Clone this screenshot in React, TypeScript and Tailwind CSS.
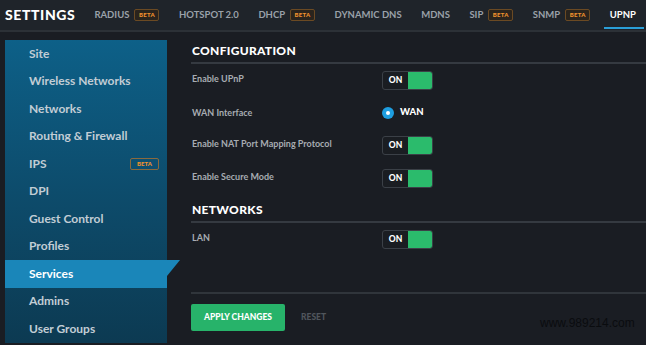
import React from "react";

const Beta = () => (
  <span className="ml-[5px] inline-flex h-[12px] w-[25px] shrink-0 items-center justify-center rounded-[2px] border border-[#6b4a23] bg-[#2a241d] text-[6px] font-black leading-none tracking-[0.3px] text-[#f0922e]">
    BETA
  </span>
);

const Tab = ({ label, beta, active }: { label: string; beta?: boolean; active?: boolean }) => (
  <div className="relative flex h-full shrink-0 items-center whitespace-nowrap">
    <span className={"text-[9.5px] font-bold leading-none " + (active ? "text-white" : "text-[#9aa1a9]")}>{label}</span>
    {beta && <Beta />}
    {active && <div className="absolute bottom-[1px] left-[-6px] right-[-8px] h-[2px] bg-[#2a9fd8]" />}
  </div>
);

const Toggle = () => (
  <div className="flex h-[19px] w-[51px] overflow-hidden rounded-[3px] border border-[#3b4047] bg-[#1a1d22]">
    <div className="flex w-[25px] items-center justify-center text-[8.5px] font-black leading-none text-white">ON</div>
    <div className="flex-1 bg-[#2bbb6c]" />
  </div>
);

const items = [
  "Site",
  "Wireless Networks",
  "Networks",
  "Routing & Firewall",
  "IPS",
  "DPI",
  "Guest Control",
  "Profiles",
  "Services",
  "Admins",
  "User Groups",
];

export default function App() {
  return (
    <div
      className="relative h-[345px] w-[646px] overflow-hidden bg-[#1a1d23]"
      style={{ fontFamily: "Lato, 'Open Sans', sans-serif" }}
    >
      {/* top bar */}
      <div className="flex h-[30px] items-center bg-[#1f242a] pl-[5px]">
        <span className="shrink-0 text-[14px] font-black leading-none tracking-[0.6px] text-white">SETTINGS</span>
        <div className="ml-[19px] flex h-full items-center gap-[19.5px]">
          <Tab label="RADIUS" beta />
          <Tab label="HOTSPOT 2.0" />
          <Tab label="DHCP" beta />
          <Tab label="DYNAMIC DNS" />
          <Tab label="MDNS" />
          <Tab label="SIP" beta />
          <Tab label="SNMP" beta />
          <Tab label="UPNP" active />
        </div>
      </div>
      <div className="h-[2px] bg-[#2c3137]" />

      <div className="flex">
        {/* sidebar */}
        <div className="ml-[5px] mt-[8px] w-[162px] bg-gradient-to-b from-[#0d6088] via-[#0d4c6c] to-[#0c3a52]">
          {items.map((it) => {
            const active = it === "Services";
            return (
              <div
                key={it}
                className={
                  "relative flex h-[27.5px] items-center pl-[24px] text-[12px] font-bold leading-none " +
                  (active ? "bg-[#1a86b9] text-white" : "text-[#c2cdd5]")
                }
              >
                {it}
                {it === "IPS" && (
                  <span className="absolute left-[125px] top-[8px] flex h-[12px] w-[29px] items-center justify-center rounded-[2px] border border-[#8a6a3e] text-[6px] font-black text-[#f0922e]">
                    BETA
                  </span>
                )}
                {active && (
                  <svg className="absolute left-[162px] top-0" width="14" height="28" viewBox="0 0 14 28">
                    <polygon points="0,0 13,0 0,16" fill="#1a86b9" />
                  </svg>
                )}
              </div>
            );
          })}
        </div>

        {/* main */}
        <div className="ml-[24px] flex-1">
          <div className="flex h-[30px] items-end pb-[5px] pl-[1px] text-[12px] font-black leading-none tracking-[0.3px] text-white">
            CONFIGURATION
          </div>
          <div className="h-[2px] bg-[#353a41]" />
          <div className="flex h-[32px] items-center">
            <span className="w-[191px] pb-[3px] pl-[1px] text-[9px] font-bold text-[#a7acb2]">Enable UPnP</span>
            <Toggle />
          </div>
          <div className="flex h-[33px] items-center">
            <span className="w-[191px] pl-[1px] text-[9px] font-bold text-[#a7acb2]">WAN Interface</span>
            <span className="flex h-[12px] w-[12px] items-center justify-center rounded-full bg-[#1e9ee0]">
              <span className="h-[4px] w-[4px] rounded-full bg-white" />
            </span>
            <span className="ml-[6px] text-[9.5px] font-black text-white">WAN</span>
          </div>
          <div className="flex h-[32px] items-center">
            <span className="w-[191px] pb-[3px] pl-[1px] text-[9px] font-bold text-[#a7acb2]">Enable NAT Port Mapping Protocol</span>
            <Toggle />
          </div>
          <div className="flex h-[34px] items-center">
            <span className="w-[191px] pb-[3px] pl-[1px] text-[9px] font-bold text-[#a7acb2]">Enable Secure Mode</span>
            <Toggle />
          </div>
          <div className="flex h-[26px] items-end pb-[5px] pl-[1px] text-[12px] font-black leading-none tracking-[0.3px] text-white">
            NETWORKS
          </div>
          <div className="h-[2px] bg-[#353a41]" />
          <div className="flex h-[33px] items-center">
            <span className="w-[191px] pb-[3px] pl-[1px] text-[9px] font-bold text-[#a7acb2]">LAN</span>
            <Toggle />
          </div>
          <div className="h-[36px]" />
          <div className="h-[2px] bg-[#30353b]" />
          <div className="mt-[10px] flex items-center">
            <div className="flex h-[27px] w-[94px] items-center justify-center rounded-[2px] bg-[#27b36a] text-[8.5px] font-black text-white">
              APPLY CHANGES
            </div>
            <span className="ml-[16px] text-[8.5px] font-black text-[#50555c]">RESET</span>
          </div>
        </div>
      </div>

      <span
        className="absolute left-[540px] top-[317px] whitespace-nowrap text-[12px] leading-none"
        style={{ fontFamily: "'Liberation Sans', sans-serif", color: "#0a0c0f" }}
      >
        www.989214.com
      </span>
    </div>
  );
}
